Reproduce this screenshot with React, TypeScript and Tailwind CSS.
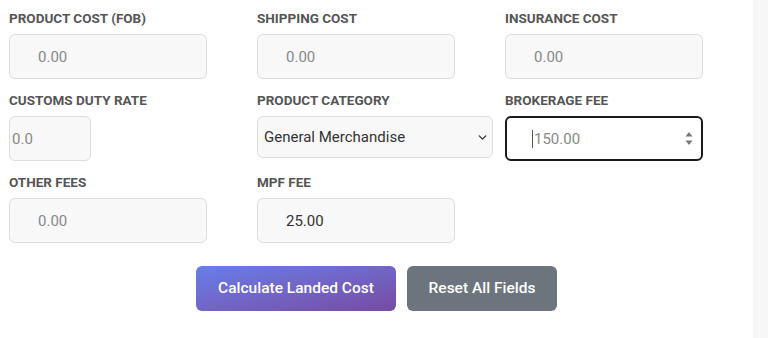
import { ChevronDown } from 'lucide-react';

const labelCls = 'block mb-[8px] text-[13.5px] leading-4 font-bold uppercase text-[#555]';
const inputCls =
  'h-[45px] rounded-md border border-[#ddd] bg-[#f8f8f8] text-[15px] text-[#333] placeholder:text-[#888] outline-none';

function Field({
  label,
  placeholder,
  value,
  width = 'w-[198px]',
  pad = 'pl-7',
}: {
  label: string;
  placeholder?: string;
  value?: string;
  width?: string;
  pad?: string;
}) {
  return (
    <div>
      <label className={labelCls}>{label}</label>
      <input
        type="text"
        className={`${inputCls} ${width} ${pad}`}
        placeholder={placeholder}
        defaultValue={value}
      />
    </div>
  );
}

export default function App() {
  return (
    <div className="flex h-[338px] w-[768px] bg-[#f7f7f7] font-['Roboto',sans-serif]">
      <div className="w-[753px] bg-white pl-[9px] pt-[10px]">
        <div className="grid grid-cols-[238px_238px_238px] gap-x-[10px] gap-y-[13px] items-start">
          <Field label="Product Cost (FOB)" placeholder="0.00" />
          <Field label="Shipping Cost" placeholder="0.00" />
          <Field label="Insurance Cost" placeholder="0.00" />

          <Field label="Customs Duty Rate" placeholder="0.0" width="w-[82px]" pad="pl-[2px]" />
          <div>
            <label className={labelCls}>Product Category</label>
            <div className="relative w-[236px]">
              <select className="h-[42px] w-full appearance-none rounded-md border border-[#ddd] bg-[#f8f8f8] pl-[6px] text-[15px] text-[#333] outline-none">
                <option>General Merchandise</option>
              </select>
              <ChevronDown
                className="pointer-events-none absolute right-[4px] top-[15px] h-[13px] w-[13px] text-[#333]"
                strokeWidth={2.5}
              />
            </div>
          </div>
          <div>
            <label className={labelCls}>Brokerage Fee</label>
            <div className="relative w-[198px]">
              <input
                type="text"
                className="h-[45px] w-full rounded-md border-2 border-[#1a1a1a] bg-white pl-[27px] text-[15px] text-[#333] placeholder:text-[#888] outline-none"
                placeholder="150.00"
              />
              <span className="pointer-events-none absolute left-[27px] top-[14px] h-[18px] w-px bg-[#555]" />
              <svg
                className="pointer-events-none absolute right-[10px] top-[15px]"
                width="8"
                height="15"
                viewBox="0 0 8 15"
              >
                <path d="M4 1 L7.5 5.5 L0.5 5.5 Z" fill="#777" />
                <path d="M4 14 L7.5 9.5 L0.5 9.5 Z" fill="#777" />
              </svg>
            </div>
          </div>

          <Field label="Other Fees" placeholder="0.00" />
          <Field label="MPF Fee" value="25.00" />
        </div>

        <div className="mt-[23px] flex justify-center gap-[11px] pr-[9px]">
          <button className="h-[45px] w-[200px] rounded-md bg-gradient-to-br from-[#667eea] to-[#764ba2] text-[15.5px] font-medium text-white">
            Calculate Landed Cost
          </button>
          <button className="h-[45px] w-[150px] rounded-md bg-[#6c757d] text-[15.5px] font-medium text-white">
            Reset All Fields
          </button>
        </div>
      </div>
    </div>
  );
}
